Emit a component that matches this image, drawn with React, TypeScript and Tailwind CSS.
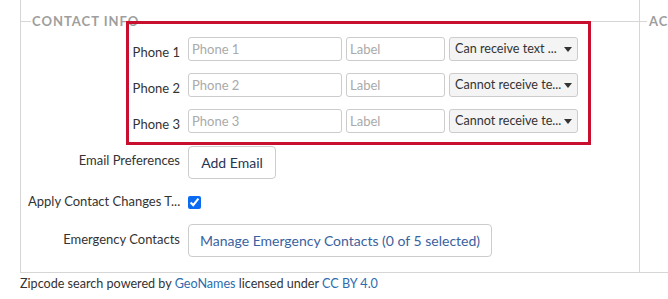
import React from "react";

function Caret() {
  return (
    <svg width="8" height="5" viewBox="0 0 8 5" className="shrink-0 ml-auto">
      <path d="M0 0 L8 0 L4 5 Z" fill="#333" />
    </svg>
  );
}

function PhoneRow({ n, sel, first }: { n: number; sel: string; first?: boolean }) {
  return (
    <div className={`flex items-center h-[24px] ${first ? "mt-[9px]" : "mt-[12px]"}`}>
      <div className="w-[152px] text-right text-[13px] text-[#333] leading-[16px] pt-[6px]">Phone {n}</div>
      <input
        readOnly
        placeholder={`Phone ${n}`}
        className="ml-[8px] w-[154px] h-[24px] border border-[#ccc] rounded-[3px] pl-[3px] text-[13px] placeholder:text-[#aaa] outline-none bg-white"
      />
      <input
        readOnly
        placeholder="Label"
        className="ml-[4px] w-[99px] h-[24px] border border-[#ccc] rounded-[3px] pl-[3px] text-[13px] placeholder:text-[#aaa] outline-none bg-white"
      />
      <div className="ml-[4px] w-[129px] h-[24px] border border-[#ccc] rounded-[3px] bg-[#f4f4f4] flex items-center pl-[5px] pr-[5px] text-[12.6px] text-[#333]">
        <span className="whitespace-nowrap">{sel}</span>
        <Caret />
      </div>
    </div>
  );
}

export default function App() {
  return (
    <div
      className="relative w-[668px] h-[299px] bg-white overflow-hidden"
      style={{ fontFamily: "Lato, 'Open Sans', sans-serif" }}
    >
      <div className="ml-[20px] w-[648px] h-[273px] border-l border-b border-[#d6d6d6] flex">
        <div className="w-[619px] border-r border-[#d6d6d6] flex flex-col pl-[7px]">
          <div className="flex items-center h-[13px] mt-[15px] -ml-[7px]">
            <div className="w-[10px] h-px bg-[#d6d6d6]" />
            <span className="px-[1px] text-[13px] font-bold tracking-[1px] text-[#9e9e9e] leading-[13px]">CONTACT INFO</span>
            <div className="flex-1 h-px bg-[#d6d6d6]" />
          </div>
          <PhoneRow n={1} sel="Can receive text ..." first />
          <PhoneRow n={2} sel="Cannot receive te..." />
          <PhoneRow n={3} sel="Cannot receive te..." />
          <div className="flex items-start mt-[13px]">
            <div className="w-[152px] text-right text-[13px] text-[#333] leading-[16px] pt-[6px]">Email Preferences</div>
            <button className="ml-[8px] w-[88px] h-[33px] border border-[#ccc] rounded-[4px] bg-white text-[14px] text-[#243556]">
              Add Email
            </button>
          </div>
          <div className="flex items-center mt-[12px] h-[20px]">
            <div className="w-[152px] text-right text-[13px] text-[#333] leading-[16px] whitespace-nowrap overflow-hidden">
              Apply Contact Changes T...
            </div>
            <input type="checkbox" checked readOnly className="ml-[8px] mt-[3px] w-[13px] h-[13px] accent-[#0b6bf0]" />
          </div>
          <div className="flex items-start mt-[13px]">
            <div className="w-[152px] text-right text-[13px] text-[#333] leading-[16px] pt-[7px]">Emergency Contacts</div>
            <button className="ml-[8px] w-[304px] h-[33px] border border-[#ccc] rounded-[4px] bg-white text-[14px] text-[#3a62a0] whitespace-nowrap">
              Manage Emergency Contacts (0 of 5 selected)
            </button>
          </div>
        </div>
        <div className="flex-1 overflow-hidden">
          <div className="flex items-center h-[13px] mt-[15px]">
            <div className="w-[7px] h-px bg-[#d6d6d6] shrink-0" />
            <span className="px-[2px] text-[13px] font-bold tracking-[1px] text-[#9e9e9e] leading-[13px] whitespace-nowrap">ACC</span>
          </div>
        </div>
      </div>
      <div className="ml-[20px] mt-[2px] text-[12.6px] leading-[18px] text-[#333] whitespace-nowrap">
        Zipcode search powered by <span className="text-[#2b6cb0]">GeoNames</span> licensed under{" "}
        <span className="text-[#2b6cb0]">CC BY 4.0</span>
      </div>
      <div className="absolute left-[126px] top-[21px] w-[465px] h-[124px] border-[3px] border-[#c8102e] pointer-events-none" />
    </div>
  );
}
